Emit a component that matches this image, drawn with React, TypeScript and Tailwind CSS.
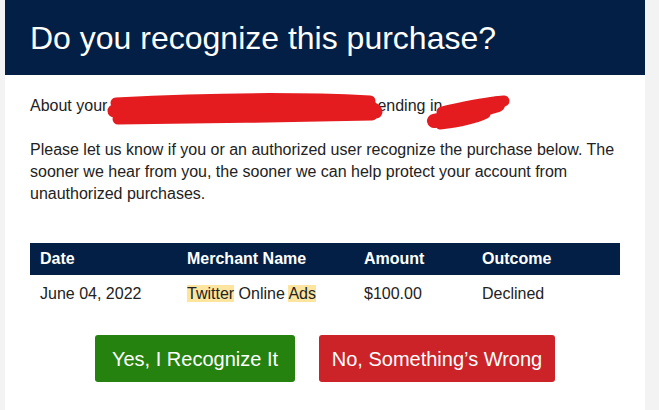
import React from "react";

const font = { fontFamily: '"Liberation Sans", Arial, sans-serif' };

// red marker scribbles that hide the card name and digits
const Scribbles = () => (
  <svg className="absolute left-0 top-0 pointer-events-none" width="520" height="40" viewBox="0 0 520 40">
    <g stroke="#e51c1f" strokeLinecap="round" strokeLinejoin="round" fill="none">
      <path d="M86 11 C 160 7, 260 5, 340 9" strokeWidth="11" />
      <path d="M84 19 C 170 16, 270 16, 345 18" strokeWidth="13" />
      <path d="M88 27 C 170 26, 260 25, 342 23" strokeWidth="11" />
      <path d="M340 14 L 346 20" strokeWidth="13" />
      <path d="M404 29 C 425 25, 445 20, 468 13" strokeWidth="14" />
      <path d="M412 20 C 430 16, 450 11, 474 9" strokeWidth="11" />
      <path d="M410 33 C 428 31, 444 28, 456 22" strokeWidth="9" />
      <path d="M448 14 L 470 10" strokeWidth="12" />
    </g>
  </svg>
);

const Hl = ({ children }: { children: React.ReactNode }) => (
  <span className="bg-[#fde59f]">{children}</span>
);

export default function App() {
  return (
    <div className="min-h-screen w-full bg-[#f3f3f3] pl-[5px] pr-[14px]" style={font}>
      <div className="min-h-screen w-[640px] bg-white">
        <div className="flex h-[75px] items-center bg-[#041f45] px-[25px]">
          <h1 className="text-[32px] leading-none text-white">Do you recognize this purchase?</h1>
        </div>

        <div className="px-[25px] text-[16px] text-[#222]">
          <div className="relative mt-[20px]">
            <p className="leading-[22px]">
              About your<span className="inline-block w-[270px]" />ending in
            </p>
            <div className="absolute left-[0px] top-[-3px]">
              <Scribbles />
            </div>
          </div>

          <p className="mt-[22px] leading-[22px]">
            Please let us know if you or an authorized user recognize the purchase below. The sooner we hear from you, the
            sooner we can help protect your account from unauthorized purchases.
          </p>

          <table className="mt-[38px] w-[590px] border-collapse text-left">
            <thead>
              <tr className="bg-[#041f45] text-white">
                <th className="w-[157px] py-[6px] pl-[10px] font-bold leading-[20px]">Date</th>
                <th className="w-[177px] py-[6px] pl-[0px] font-bold leading-[20px]">Merchant Name</th>
                <th className="w-[118px] py-[6px] font-bold leading-[20px]">Amount</th>
                <th className="py-[6px] font-bold leading-[20px]">Outcome</th>
              </tr>
            </thead>
            <tbody>
              <tr>
                <td className="py-[9px] pl-[10px] leading-[20px]">June 04, 2022</td>
                <td className="py-[9px] leading-[20px]">
                  <Hl>Twitter</Hl> Online <Hl>Ads</Hl>
                </td>
                <td className="py-[9px] leading-[20px]">$100.00</td>
                <td className="py-[9px] leading-[20px]">Declined</td>
              </tr>
            </tbody>
          </table>

          <div className="mt-[22px] flex justify-center gap-6">
            <button className="h-[47px] w-[200px] rounded-[3px] bg-[#25820f] text-[20px] text-white">
              Yes, I Recognize It
            </button>
            <button className="h-[47px] w-[236px] rounded-[3px] bg-[#cc2329] text-[20px] text-white">
              No, Something’s Wrong
            </button>
          </div>
        </div>
      </div>
    </div>
  );
}
